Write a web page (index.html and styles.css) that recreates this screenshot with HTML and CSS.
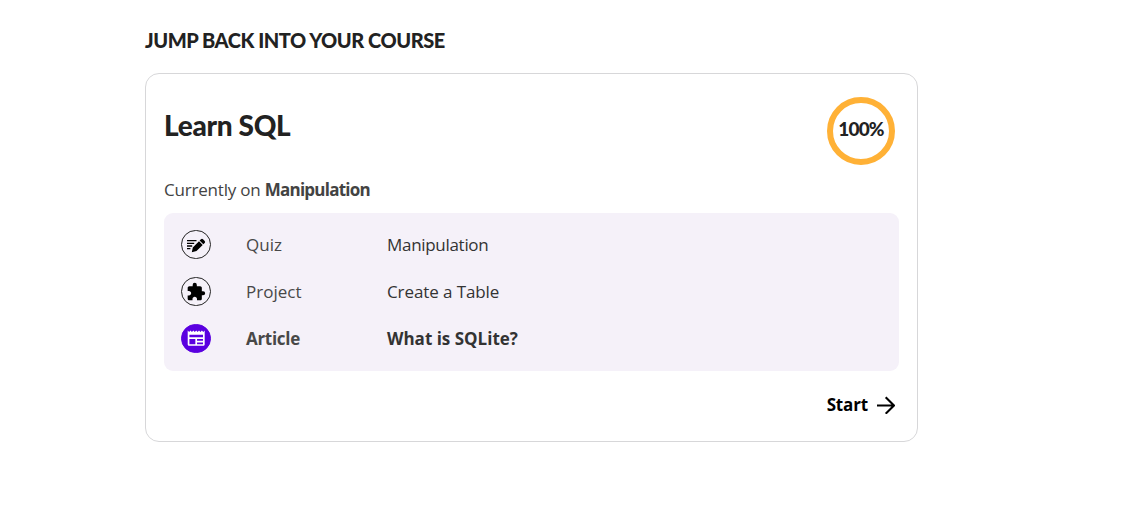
FILE: index.html
```html
<!DOCTYPE html>
<html lang="en">
<head>
<meta charset="utf-8">
<title>Learn SQL</title>
<link rel="stylesheet" href="styles.css">
</head>
<body>
<main class="page">
  <h2 class="section-title">JUMP BACK INTO YOUR COURSE</h2>
  <section class="card">
    <header class="card-header">
      <h1 class="course">Learn SQL</h1>
      <div class="progress"><span class="percent">100%</span></div>
    </header>
    <p class="current">Currently on <b class="current-name">Manipulation</b></p>
    <ul class="lessons">
      <li class="lesson">
        <span class="badge">
          <svg width="20" height="20" viewBox="0 0 20 20"><path d="M1 5.600h9.500M1 8.300h7.200M1 11h5.200M1 13.700h3.400" stroke="#000" stroke-width="1.300"/><path d="M5.800 17.200l1-4.800 6.200-6.200 3.700 3.700-6.200 6.200zM13.600 5.600l1.400-1.400q1-.9 2 0l1.700 1.700q.9 1 0 2l-1.400 1.400z"/></svg>
        </span>
        <span class="kind">Quiz</span><span class="name manipulation">Manipulation</span>
      </li>
      <li class="lesson">
        <span class="badge">
          <svg class="puzzle" width="20" height="20" viewBox="0 0 24 24"><path d="M20.500 11H19V7c0-1.100-.9-2-2-2h-4V3.500a2.500 2.500 0 0 0-5 0V5H4c-1.100 0-1.990.9-1.990 2v3.800H3.500c1.490 0 2.700 1.210 2.700 2.700s-1.210 2.700-2.700 2.700H2V20c0 1.100.9 2 2 2h3.800v-1.500c0-1.490 1.210-2.700 2.700-2.700s2.700 1.210 2.700 2.700V22H17c1.100 0 2-.9 2-2v-4h1.500a2.500 2.500 0 0 0 0-5z"/></svg>
        </span>
        <span class="kind">Project</span><span class="name table">Create a Table</span>
      </li>
      <li class="lesson active">
        <span class="badge">
          <svg width="20.400" height="20.400" viewBox="0 0 24 24" fill="#fff"><path d="M22 3l-1.670 1.670L18.670 3 17 4.670 15.330 3l-1.660 1.670L12 3l-1.670 1.670L8.670 3 7 4.670 5.330 3 3.670 4.670 2 3v16c0 1.100.9 2 2 2h16c1.100 0 2-.9 2-2V3zM11 19H4v-6h7v6zm9 0h-7v-2h7v2zm0-4h-7v-2h7v2zm0-4H4V8h16v3z"/></svg>
        </span>
        <span class="kind article">Article</span><span class="name">What is SQLite?</span>
      </li>
    </ul>
    <a class="start"><span>Start</span>
      <svg width="18" height="18" viewBox="0 0 18 18" fill="none" stroke="#000" stroke-width="2.100"><path d="M0 9.500h17M8.700 1.300L17 9.500l-8.300 8.200"/></svg>
    </a>
  </section>
</main>
</body>
</html>
```
FILE: styles.css
```css
* { box-sizing: border-box; }
body { margin: 0; background: #fff; color: #222; font: 17px/24px "Open Sans", sans-serif; }
.page { width: 773px; margin-left: 145px; padding-top: 28px; }
.section-title { margin: 0; font: 900 20px/25px Lato, sans-serif; letter-spacing: -.46px; white-space: nowrap; }
.card { height: 369px; margin-top: 20px; padding: 22px 18px 0; border: 1px solid #d7d7d9; border-radius: 14px; }
.card-header { display: flex; justify-content: space-between; height: 69px; padding-right: 4px; }
.course { margin: 11px 0 0; font: 900 28px/36px Lato, sans-serif; letter-spacing: -.32px; }
.progress { display: flex; justify-content: center; width: 68px; height: 68px; margin-top: .5px; padding-top: 14px; border: 6px solid #ffb136; border-radius: 50%; }
.percent { font: 900 19px/24px Lato, sans-serif; letter-spacing: -.8px; }
.current { margin: 13px 0 11px; color: #434343; white-space: nowrap; letter-spacing: -.2px; }
.current-name { font-weight: 700; letter-spacing: -.77px; }
.lessons { display: flex; flex-direction: column; gap: 18px; height: 158px; margin: 0; padding: 17px; border-radius: 9px; background: #f5f1f9; list-style: none; }
.lesson { display: grid; grid-template-columns: 65px 141px 1fr; align-items: center; height: 29px; }
.badge { display: flex; align-items: center; justify-content: center; width: 30px; height: 29px; border: 1px solid #222; border-radius: 15px; }
.kind { color: #484848; }
.name { color: #333; }
.manipulation { letter-spacing: -.3px; }
.table { letter-spacing: -.1px; }
.article { letter-spacing: -.3px; }
.active { font-weight: 700; }
.active .badge { border-color: #5a00e0; background: #5a00e0; }
.start { display: flex; align-items: center; justify-content: flex-end; gap: 9px; margin: 22px 4px 0 0; color: #000; font-weight: 700; letter-spacing: -.15px; }
```
